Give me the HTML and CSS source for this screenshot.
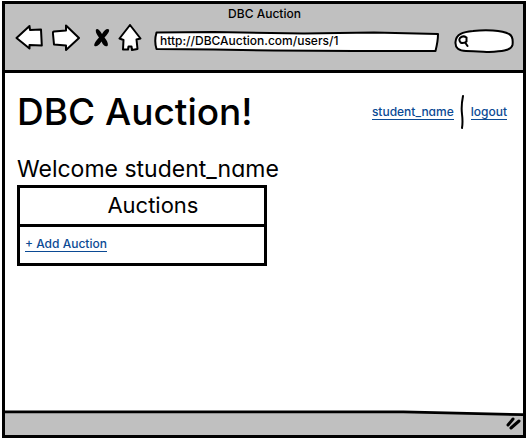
FILE: index.html
```
<!DOCTYPE html>
<html lang="en">
<head>
<meta charset="utf-8">
<title>DBC Auction</title>
<link rel="stylesheet" href="styles.css">
</head>
<body>
<div class="window">
  <header class="chrome">
    <div class="window-title">DBC Auction</div>
    <div class="toolbar">
      <button class="tool" type="button" aria-label="Back">
        <svg width="28" height="28" viewBox="0 0 28 28"><path class="shape" d="M1.500 14 14.500 2l.5 4 11-.5.8 16-12.300-.5v3.500z"/></svg>
      </button>
      <button class="tool" type="button" aria-label="Forward">
        <svg width="28" height="28" viewBox="0 0 28 28"><path class="shape" d="M27 14 14 1.500v5L2 7.500Q.5 8 1 10L2 20.500 14 21.500v4.500z"/></svg>
      </button>
      <button class="tool stop" type="button" aria-label="Stop">
        <svg width="18" height="20" viewBox="0 0 18 20"><path class="cross" d="M3 1.500Q5-.5 9 6 13-.5 16 1.500 17 4 11.500 9.500 16 15 14.500 18 11 19.500 8.500 13.500 4.500 19.500 1.500 18 0 16 6 9.500 2 4.500 3 1.500z"/></svg>
      </button>
      <button class="tool" type="button" aria-label="Home">
        <svg width="24" height="28" viewBox="0 0 24 28"><path class="shape" d="M12 1 1.500 14.500 5.500 16 5 25.500 10 25.500 10.500 22.500 13.500 22.500 14 26 19.500 25 18.500 15.500 22.500 14.500z"/></svg>
      </button>
      <div class="address">
        <svg class="outline" viewBox="0 0 285 21" preserveAspectRatio="none" aria-hidden="true"><path class="shape" d="M2.500 1.500 60 1 150 2.500 220 1.500 284 3 Q284 10 281.500 20 L200 20 120 19.500 60 18.500 2.500 18 Q0 10 2.500 1.500z"/></svg>
        <input class="address-input" type="text" aria-label="Address" value="http://DBCAuction.com/users/1">
      </div>
      <div class="search">
        <svg class="outline" viewBox="0 0 60 24" preserveAspectRatio="none" aria-hidden="true"><path class="shape" d="M1.500 13C2 5 9 3 19 2 31 .5 48 1 55 5 59 7 59 12 58.500 16 57 22 46 22.500 35 23 26 22.500 20 22 12 22 5 22 1 19 1.500 13z"/></svg>
        <svg class="lens" width="12" height="13" viewBox="0 0 12 13" aria-hidden="true"><path d="M2 3Q5 0 8.500 2.500V6.500Q5.500 9 2.500 7.500 .5 5 2 3zM7.500 8 9.500 11"/></svg>
        <input class="search-input" type="search" aria-label="Search">
      </div>
    </div>
  </header>

  <main class="page">
    <div class="masthead">
      <h1 class="title">DBC Auction!</h1>
      <nav class="account">
        <a class="link" href="#">student_name</a>
        <svg class="divider" width="5" height="36" viewBox="0 0 5 36" aria-hidden="true"><path d="M3 2Q1 12 2 20 3 28 2 34"/></svg>
        <a class="link" href="#">logout</a>
      </nav>
    </div>
    <h2 class="welcome">Welcome student_name</h2>
    <table class="auctions">
      <thead><tr><th>Auctions</th></tr></thead>
      <tbody><tr><td><a class="link" href="#">+ Add Auction</a></td></tr></tbody>
    </table>
  </main>

  <footer class="status">
    <svg class="status-edge" viewBox="0 0 520 27" preserveAspectRatio="none" aria-hidden="true"><path d="M0 2 280 2 400 2 520 5V27H0z" class="fill"/><path class="edge" d="M0 2 280 2 400 2 520 5"/></svg>
    <svg class="grip" width="18" height="16" viewBox="0 0 18 16" aria-hidden="true"><path d="M3 10 8 4M6 13 14 6"/></svg>
  </footer>
</div>
</body>
</html>
```
FILE: styles.css
```
* {
  box-sizing: border-box;
}

body {
  margin: 0;
  background: #fff;
  color: #000;
  font-family: Inter, "Liberation Sans", sans-serif;
  font-feature-settings: "cv11";
  font-size: 12px;
  font-weight: 500;
  line-height: 16px;
}

.window {
  display: flex;
  flex-direction: column;
  min-height: calc(100vh - 2px);
  margin: 1px 1px 1px 2px;
  border: 3px solid #000;
}

.chrome {
  padding: 2px 9px 16px 10px;
  background: #c0c0c0;
  border-bottom: 3px solid #000;
}

.window-title {
  text-align: center;
}

.toolbar {
  display: flex;
  align-items: center;
  gap: 9px;
  height: 32px;
}

.tool {
  display: flex;
  padding: 0;
  border: 0;
  background: none;
}

.stop {
  margin: 0 -2px 0 4px;
}

.shape {
  fill: #fff;
  stroke: #000;
  stroke-width: 2;
  stroke-linejoin: round;
}

.cross {
  fill: #000;
}

.address,
.search {
  position: relative;
  display: flex;
  align-items: center;
}

.address {
  flex: 1;
  height: 21px;
  margin: 6px 6px 0 3px;
}

.search {
  width: 60px;
  height: 24px;
  margin-top: 6px;
}

.outline {
  position: absolute;
  inset: 0;
  width: 100%;
  height: 100%;
  overflow: visible;
}

.address-input,
.search-input {
  position: relative;
  width: 100%;
  min-width: 0;
  padding: 0 6px;
  border: 0;
  background: none;
  color: inherit;
  font: inherit;
  font-feature-settings: inherit;
  appearance: none;
  outline: 0;
}

.lens {
  position: relative;
  flex: none;
  margin-left: 4px;
  fill: none;
  stroke: #000;
  stroke-width: 2;
  stroke-linecap: round;
}

.page {
  flex: 1;
  padding: 14px 16px 16px 12px;
}

.masthead {
  display: flex;
  align-items: center;
  justify-content: space-between;
}

.title {
  margin: 0;
  font-size: 37px;
  font-weight: 500;
  line-height: 50px;
}

.account {
  display: flex;
  align-items: center;
  gap: 6px;
}

.divider {
  fill: none;
  stroke: #000;
  stroke-width: 2;
  stroke-linecap: round;
}

.link {
  display: inline-block;
  border-bottom: 1px solid #0b4a94;
  color: #0b4a94;
  line-height: 14px;
  text-decoration: none;
}

.welcome {
  margin: 18px 0 2px;
  font-size: 23px;
  font-weight: 400;
  line-height: 28px;
}

.auctions {
  width: 51%;
  border-collapse: collapse;
}

.auctions th,
.auctions td {
  height: 39px;
  border: 3px solid #000;
}

.auctions th {
  padding: 0 0 2px 22px;
  font-size: 22px;
  font-weight: 400;
  line-height: 28px;
}

.auctions td {
  padding: 0 5px 2px;
}

.status {
  position: relative;
  display: flex;
  align-items: center;
  justify-content: flex-end;
  height: 25px;
}

.status-edge {
  position: absolute;
  inset: 0;
  width: 100%;
  height: 100%;
}

.fill {
  fill: #c0c0c0;
}

.edge {
  fill: none;
  stroke: #000;
  stroke-width: 3;
}

.grip {
  position: relative;
  fill: none;
  stroke: #000;
  stroke-width: 3;
  stroke-linecap: round;
}
```
